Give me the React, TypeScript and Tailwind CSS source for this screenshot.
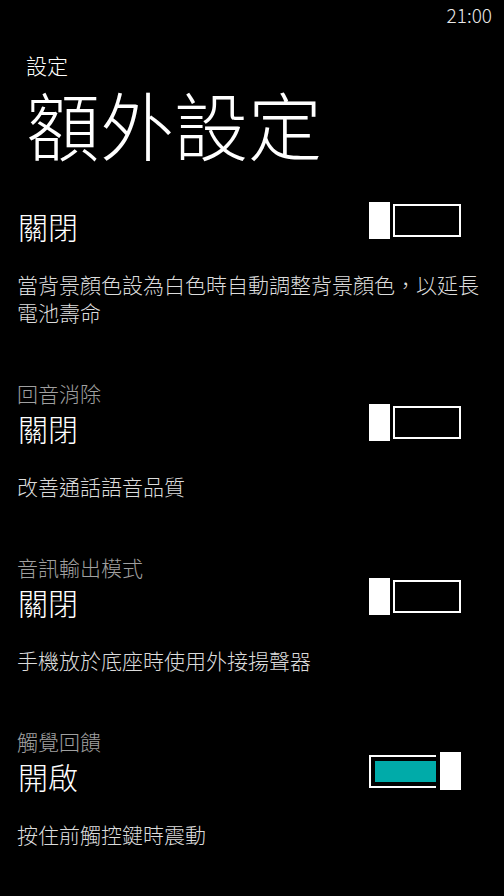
import React from 'react';

interface Item {
  label?: string;
  value: string;
  on: boolean;
  desc: string;
}

const ITEMS: Item[] = [
  { value: '關閉', on: false, desc: '當背景顏色設為白色時自動調整背景顏色，以延長電池壽命' },
  { label: '回音消除', value: '關閉', on: false, desc: '改善通話語音品質' },
  { label: '音訊輸出模式', value: '關閉', on: false, desc: '手機放於底座時使用外接揚聲器' },
  { label: '觸覺回饋', value: '開啟', on: true, desc: '按住前觸控鍵時震動' },
];

const Toggle: React.FC<{ on: boolean }> = ({ on }) => {
  if (on) {
    return (
      <div className="flex items-center gap-[4px] w-[92px]">
        <div className="flex w-[67px] h-[33px] border-2 border-r-0 border-white pl-[4px] py-[4px]">
          <div className="flex-1 bg-[#00aba9]" />
        </div>
        <div className="w-[21px] h-[38px] bg-white" />
      </div>
    );
  }
  return (
    <div className="flex items-center gap-[3px] w-[92px]">
      <div className="w-[21px] h-[37px] bg-white" />
      <div className="w-[68px] h-[33px] border-2 border-white" />
    </div>
  );
};

export default function App() {
  return (
    <div
      className="w-[504px] h-[896px] bg-black text-white overflow-hidden font-light"
      style={{ fontFamily: '"Noto Sans CJK TC", "Noto Sans", sans-serif' }}
    >
      {/* status bar */}
      <div className="h-[32px] flex justify-end pr-[12px] pt-[3px]">
        <span className="text-[19px] leading-[24px] text-[#e8e8e8]">21:00</span>
      </div>

      {/* page header */}
      <div className="pl-[26px]">
        <div className="mt-[23px] text-[21px] leading-[20px]">設定</div>
        <div className="mt-[11px] text-[74px] leading-[74px]">額外設定</div>
      </div>

      {/* settings list */}
      <div className="pl-[17px] pr-[17px] mt-[42px]">
        {ITEMS.map((it, i) => (
          <div key={i} className={i === 0 ? '' : 'mt-[57px]'}>
            {it.label && (
              <div className="text-[21px] leading-[20px] text-[#a0a0a0]">{it.label}</div>
            )}
            <div className={`flex items-start justify-between h-[44px] pr-[26px] ${it.label ? 'mt-[1px]' : ''}`}>
              <span className="mt-[6px] text-[30px] leading-[36px] pl-[1px]">{it.value}</span>
              <Toggle on={it.on} />
            </div>
            <div className="mt-[24px] text-[21px] leading-[28px] text-[#dcdcdc]">{it.desc}</div>
          </div>
        ))}
      </div>
    </div>
  );
}
